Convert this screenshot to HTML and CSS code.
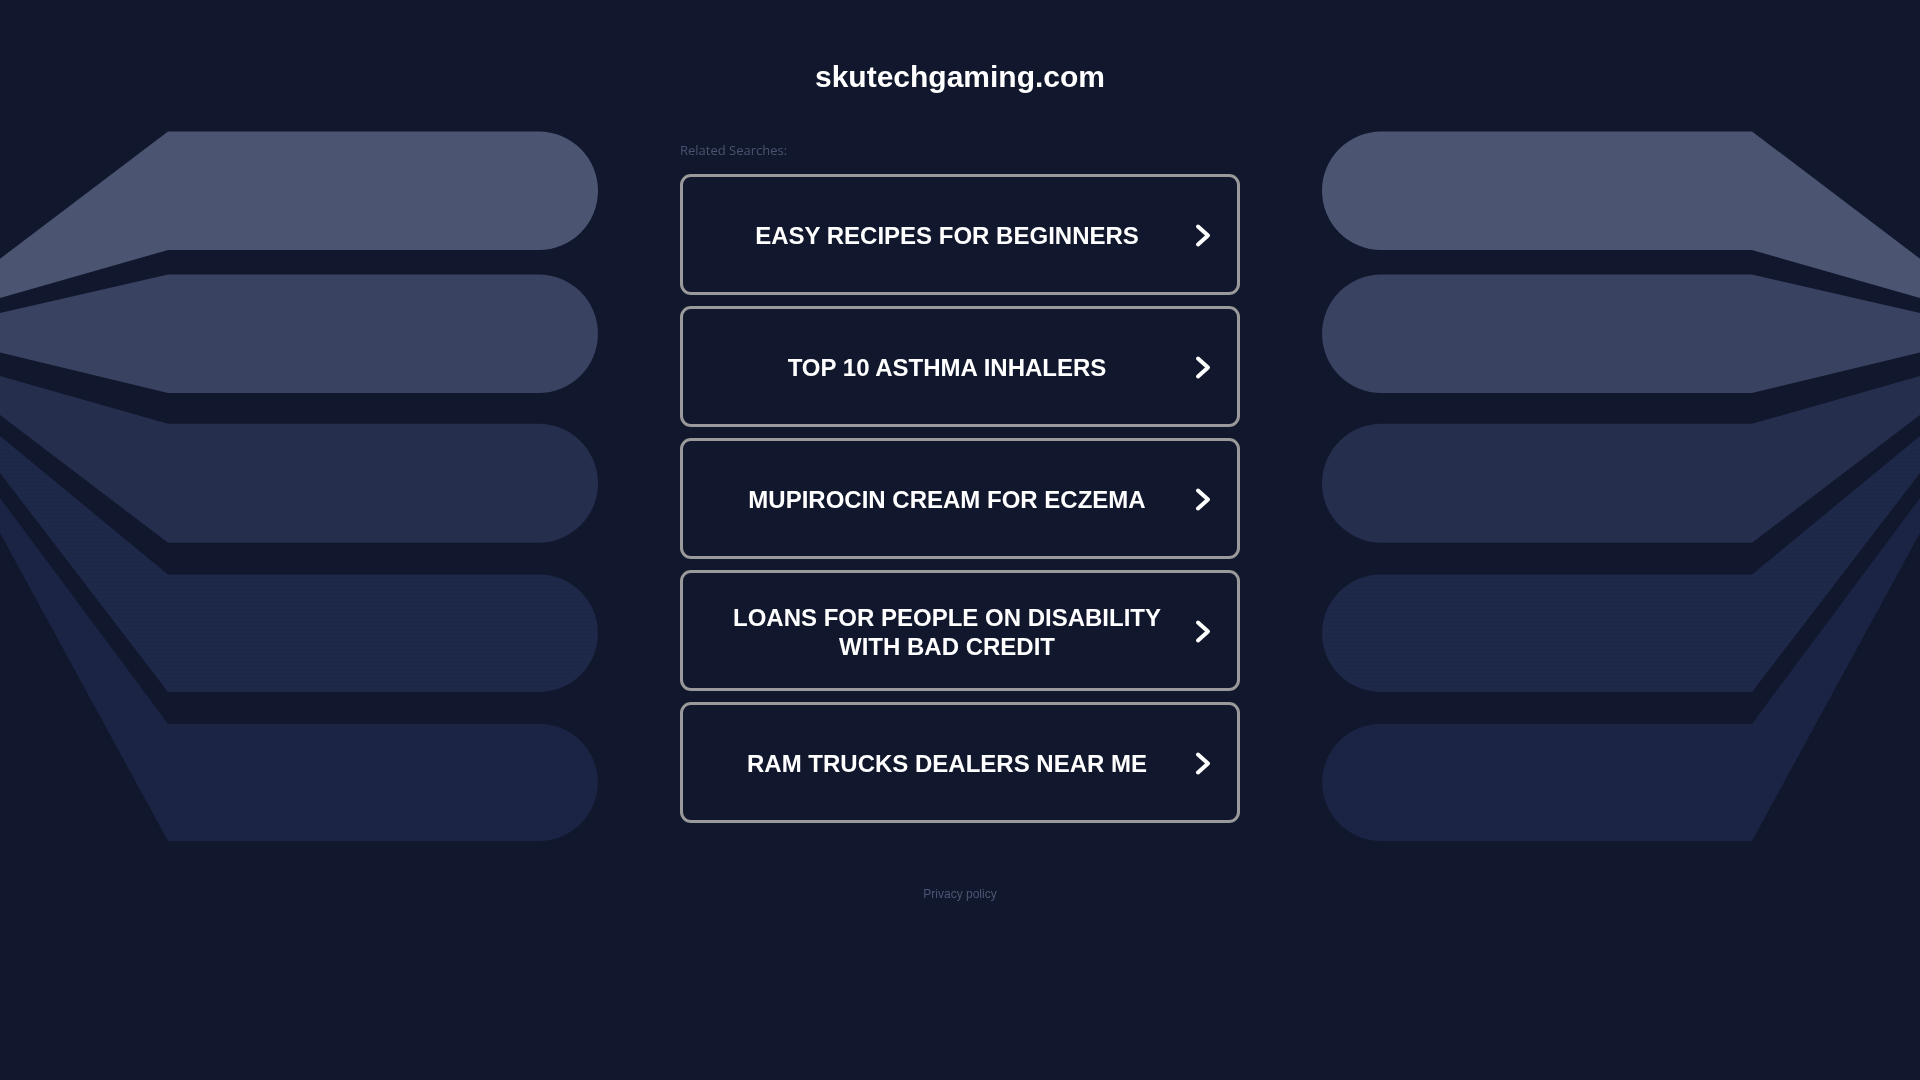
FILE: index.html
```html
<!DOCTYPE html>
<html lang="en">
<head>
<meta charset="utf-8">
<title>skutechgaming.com</title>
<link rel="stylesheet" href="styles.css">
</head>
<body>
<svg class="bg" width="1920" height="1080" viewBox="0 0 1920 1080" xmlns="http://www.w3.org/2000/svg" aria-hidden="true">
  <defs>
    <pattern id="dots" width="4" height="4" patternUnits="userSpaceOnUse">
      <circle cx="2" cy="2" r="0.6" fill="#151c35"/>
    </pattern>
    <g id="shapes">
      <path d="M0,258.8 L168,131.4 L538.7,131.4 A59.3,59.3 0 0 1 538.7,250 L168,250 L0,297.9 Z" fill="#4b5572"/>
      <path d="M0,313 L168,274.5 L538.7,274.5 A59.25,59.25 0 0 1 538.7,393 L168,393 L0,352.6 Z" fill="#394261"/>
      <path d="M0,376 L168,423.8 L538.5,423.8 A59.5,59.5 0 0 1 538.5,542.8 L168,542.8 L0,415 Z" fill="#252e4d"/>
      <path d="M0,436 L168,574.5 L539.2,574.5 A58.75,58.75 0 0 1 539.2,692 L168,692 L0,473 Z" fill="#1e2849"/>
      <path d="M0,436 L168,574.5 L539.2,574.5 A58.75,58.75 0 0 1 539.2,692 L168,692 L0,473 Z" fill="url(#dots)"/>
      <path d="M0,498 L168,723.7 L539.3,723.7 A58.65,58.65 0 0 1 539.3,841 L168,841 L0,533 Z" fill="#1b2445"/>
      <path d="M0,498 L168,723.7 L539.3,723.7 A58.65,58.65 0 0 1 539.3,841 L168,841 L0,533 Z" fill="url(#dots)"/>
    </g>
  </defs>
  <use href="#shapes"/>
  <use href="#shapes" transform="translate(1920,0) scale(-1,1)"/>
</svg>

<main class="page">
  <h1 class="domain">skutechgaming.com</h1>
  <p class="related">Related Searches:</p>
  <ul class="links">
    <li><a class="link" href="#"><span class="label">EASY RECIPES FOR BEGINNERS</span><svg class="chev" width="16" height="25" viewBox="0 0 16 25"><polyline points="3,3.5 13,12.5 3,21.5"/></svg></a></li>
    <li><a class="link" href="#"><span class="label">TOP 10 ASTHMA INHALERS</span><svg class="chev" width="16" height="25" viewBox="0 0 16 25"><polyline points="3,3.5 13,12.5 3,21.5"/></svg></a></li>
    <li><a class="link" href="#"><span class="label">MUPIROCIN CREAM FOR ECZEMA</span><svg class="chev" width="16" height="25" viewBox="0 0 16 25"><polyline points="3,3.5 13,12.5 3,21.5"/></svg></a></li>
    <li><a class="link" href="#"><span class="label">LOANS FOR PEOPLE ON DISABILITY WITH BAD CREDIT</span><svg class="chev" width="16" height="25" viewBox="0 0 16 25"><polyline points="3,3.5 13,12.5 3,21.5"/></svg></a></li>
    <li><a class="link" href="#"><span class="label">RAM TRUCKS DEALERS NEAR ME</span><svg class="chev" width="16" height="25" viewBox="0 0 16 25"><polyline points="3,3.5 13,12.5 3,21.5"/></svg></a></li>
  </ul>
  <p class="privacy"><a href="#">Privacy policy</a></p>
</main>
</body>
</html>
```

FILE: styles.css
```css
html, body {
  margin: 0;
  padding: 0;
  background: #11172c;
  height: 100%;
  overflow: hidden;
}

body {
  font-family: "Liberation Sans", Arial, sans-serif;
  color: #ffffff;
}

.bg {
  position: fixed;
  left: 0;
  top: 0;
  z-index: 0;
}

.page {
  position: relative;
  z-index: 1;
  width: 560px;
  margin: 0 auto;
  padding-top: 59px;
}

.domain {
  margin: 0;
  font-size: 30px;
  line-height: 36px;
  font-weight: 700;
  text-align: center;
  color: #ffffff;
}

.related {
  margin: 47px 0 0 0;
  font-family: "Open Sans", "Noto Sans", sans-serif;
  font-size: 13px;
  line-height: 16px;
  font-weight: 500;
  color: #4a5370;
}

.links {
  list-style: none;
  margin: 16px 0 0 0;
  padding: 0;
  display: flex;
  flex-direction: column;
  gap: 11px;
}

.link {
  box-sizing: border-box;
  height: 121px;
  display: flex;
  align-items: center;
  border: 3px solid #9a9a9a;
  border-radius: 11px;
  padding: 2px 26px 0 34px;
  text-decoration: none;
  color: #ffffff;
}

.label {
  flex: 1;
  text-align: center;
  font-size: 24px;
  line-height: 29px;
  font-weight: 700;
  margin-right: 18px;
}

.chev {
  flex: none;
  fill: none;
  stroke: #ffffff;
  stroke-width: 4;
  stroke-linecap: round;
  stroke-linejoin: round;
}

.privacy {
  margin: 64px 0 0 0;
  text-align: center;
  font-size: 12px;
  line-height: 14px;
}

.privacy a {
  color: #4c5574;
  text-decoration: none;
}
```
